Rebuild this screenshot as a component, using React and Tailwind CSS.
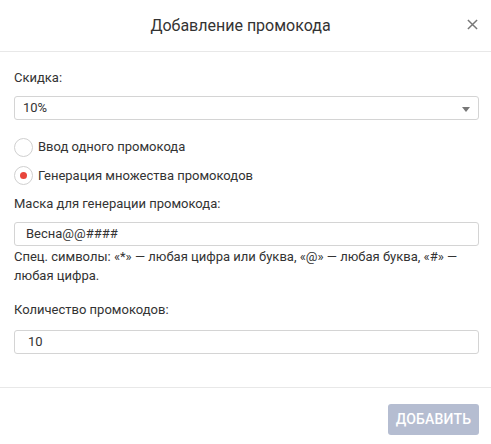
export default function App() {
  return (
    <div className="w-[491px] h-[444px] bg-white text-[#333] font-['Roboto',sans-serif] flex flex-col">
      <div className="relative h-[52px] shrink-0 flex items-center justify-center pr-[10px] border-b border-[#e8e8e8]">
        <h1 className="text-[16px] leading-none text-[#333]">Добавление промокода</h1>
        <button className="absolute right-[13px] top-[18px] w-[12px] h-[12px] flex items-center justify-center text-[#777]">
          <svg viewBox="0 0 12 12" width="11" height="11" stroke="currentColor" strokeWidth="1.6" fill="none">
            <path d="M1 1l10 10M11 1L1 11" />
          </svg>
        </button>
      </div>

      <div className="flex-1 pl-[14px] pr-[12px] pt-[17px] text-[13px]">
        <div className="leading-[18px] mb-[9px]">Скидка:</div>
        <div className="relative h-[24px] border border-[#d4d4d4] rounded-[3px] flex items-center pl-[8px]">
          <span>10%</span>
          <span className="absolute right-[8px] top-[10px] w-0 h-0 border-l-[4px] border-r-[4px] border-t-[5px] border-l-transparent border-r-transparent border-t-[#777]" />
        </div>

        <div className="mt-[17px] flex flex-col gap-[9px]">
          <label className="flex items-center gap-[5px] h-[20px]">
            <span className="w-[19px] h-[19px] rounded-full border border-[#d0d0d0] bg-white" />
            <span>Ввод одного промокода</span>
          </label>
          <label className="flex items-center gap-[5px] h-[19px]">
            <span className="w-[19px] h-[19px] rounded-full border border-[#d0d0d0] bg-white flex items-center justify-center">
              <span className="w-[7px] h-[7px] rounded-full bg-[#e8453c]" />
            </span>
            <span>Генерация множества промокодов</span>
          </label>
        </div>

        <div className="leading-[18px] mt-[10px] mb-[9px]">Маска для генерации промокода:</div>
        <div className="h-[24px] border border-[#d4d4d4] rounded-[3px] flex items-center pl-[11px]">
          <span>Весна@@####</span>
        </div>
        <p className="leading-[19px] mt-[1px]">
          Спец. символы: «*» — любая цифра или буква, «@» — любая буква, «#» — любая цифра.
        </p>

        <div className="leading-[18px] mt-[16px] mb-[11px]">Количество промокодов:</div>
        <div className="h-[24px] border border-[#d4d4d4] rounded-[3px] flex items-center pl-[13px]">
          <span>10</span>
        </div>
      </div>

      <div className="h-[57px] shrink-0 border-t border-[#e8e8e8] flex items-end justify-end pr-[12px] pb-[9px]">
        <button className="h-[31px] w-[91px] rounded-[3px] bg-[#b5bdd1] text-white text-[14px] font-medium tracking-[0.2px]">
          ДОБАВИТЬ
        </button>
      </div>
    </div>
  );
}
